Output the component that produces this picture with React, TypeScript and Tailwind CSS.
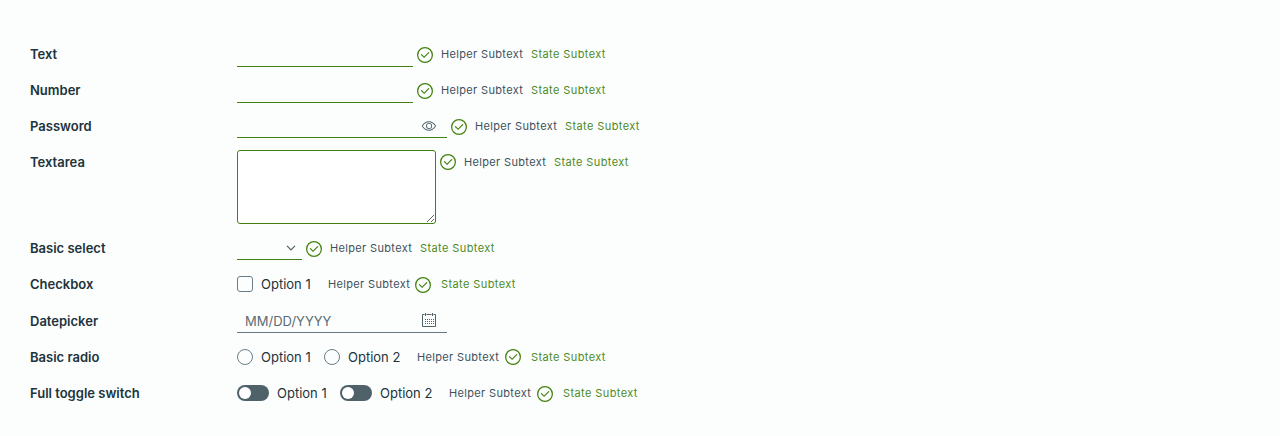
import type { ReactNode } from 'react';

function Row({ label, labelSpacing, height, children }: { label: string; labelSpacing: string; height: string; children: ReactNode }) {
  return (
    <div className={`flex items-start ${height}`}>
      <div className={`w-[207px] shrink-0 text-[13px] font-semibold leading-6 text-[#21333b] ${labelSpacing}`}>{label}</div>
      {children}
    </div>
  );
}

function Check({ className }: { className: string }) {
  return (
    <svg viewBox="0 0 36 36" className={`size-[18px] shrink-0 fill-[#42810e] ${className}`} aria-hidden="true">
      <path d="M18,2A16,16,0,1,0,34,18,16,16,0,0,0,18,2Zm0,29.5A13.5,13.5,0,1,1,31.500,18,13.500,13.500,0,0,1,18,31.5Z" />
      <path d="M26.200,12.500a1.200,1.200,0,0,0-1.700,0L16.200,20.800l-4.500-4.500a1.200,1.200,0,0,0-1.700,1.700L16.200,24.200l10-10A1.200,1.200,0,0,0,26.200,12.500Z" />
    </svg>
  );
}

const Helper = ({ className = '' }: { className?: string }) => (
  <span className={`w-[90px] shrink-0 whitespace-nowrap text-[11px] leading-6 tracking-[0.34px] text-[#40505a] ${className}`}>Helper Subtext</span>
);

const State = ({ className = '' }: { className?: string }) => (
  <span className={`whitespace-nowrap text-[11px] leading-6 tracking-[0.4px] text-[#4c8a1f] ${className}`}>State Subtext</span>
);

const Messages = ({ check = 'mt-1' }: { check?: string }) => (
  <>
    <Check className={`ml-[3px] mr-[7px] ${check}`} />
    <Helper />
    <State />
  </>
);

const Option = ({ children, className }: { children: string; className: string }) => (
  <span className={`shrink-0 whitespace-nowrap text-[13px] leading-6 text-[#21333b] ${className}`}>{children}</span>
);

const Toggle = () => (
  <span className="mt-1 flex h-4 w-8 shrink-0 items-center rounded-full bg-[#4f6169] px-0.5">
    <span className="size-3 rounded-full bg-white" />
  </span>
);

export default function App() {
  return (
    <main className="h-[436px] w-full bg-[#fcfefe] px-[30px] pt-[42px] font-['Inter',sans-serif]">
      <Row label="Text" labelSpacing="" height="h-9">
        <div className="h-[25px] w-[176px] border-b border-[#42810e]" />
        <Messages />
      </Row>
      <Row label="Number" labelSpacing="" height="h-9">
        <div className="h-[25px] w-[176px] border-b border-[#42810e]" />
        <Messages />
      </Row>
      <Row label="Password" labelSpacing="" height="h-9">
        <div className="flex h-6 w-[210px] justify-end border-b border-[#42810e] pr-2.5">
          <svg viewBox="0 0 36 36" className="mt-1 size-4 fill-[#4f6169]" aria-hidden="true">
            <path d="M33.62,17.53c-3.37-6.23-9.28-10-15.82-10S5.34,11.3,2,17.53L1.72,18l.26.48c3.37,6.23,9.28,10,15.82,10s12.46-3.72,15.82-10l.26-.48ZM17.8,26.43C12.17,26.43,7,23.29,4,18c3-5.29,8.17-8.43,13.8-8.43S28.54,12.72,31.59,18C28.54,23.29,23.42,26.43,17.8,26.43Z" />
            <path d="M18.09,11.17A6.86,6.86,0,1,0,25,18,6.86,6.86,0,0,0,18.09,11.17Zm0,11.72A4.86,4.86,0,1,1,23,18,4.87,4.87,0,0,1,18.09,22.89Z" />
          </svg>
        </div>
        <Messages />
      </Row>
      <Row label="Textarea" labelSpacing="" height="h-[86px]">
        <textarea className="h-[74px] w-[199px] resize rounded-[3px] border border-[#42810e] bg-white outline-none" aria-label="Textarea" />
        <Messages check="mt-[3px]" />
      </Row>
      <Row label="Basic select" labelSpacing="" height="h-9">
        <div className="flex h-6 w-[65px] justify-end border-b border-[#42810e] pr-1.5">
          <svg viewBox="0 0 10 6" className="mt-[9px] h-1.5 w-2.5 fill-none stroke-[#4f6169] stroke-[1.2]" aria-hidden="true">
            <path d="M1 .8 5 4.800 9 .8" />
          </svg>
        </div>
        <Messages />
      </Row>
      <Row label="Checkbox" labelSpacing="" height="h-[37px]">
        <span className="mt-1 size-4 shrink-0 rounded-[3px] border border-[#6b7d86]" />
        <Option className="ml-2 w-[67px]">Option 1</Option>
        <Helper className="w-[86px]!" />
        <Check className="mt-1" />
        <State className="ml-[9px]" />
      </Row>
      <Row label="Datepicker" labelSpacing="" height="h-9">
        <div className="flex h-6 w-[210px] justify-between border-b border-[#667882] pl-2 pr-2.5">
          <span className="text-[13px] leading-6 text-[#5b6b74]">MM/DD/YYYY</span>
          <svg viewBox="0 0 16 16" className="mt-[3px] size-4 fill-none stroke-[#4f6169]" aria-hidden="true">
            <path d="M3.500 2.500h-2v12h13v-12h-2M5.500 2.500h5M4.500 1v3M11.500 1v3" />
            <path d="M4 7.500h9M4 9.500h9M4 11.500h9" strokeDasharray="1 1" />
          </svg>
        </div>
      </Row>
      <Row label="Basic radio" labelSpacing="" height="h-9">
        <span className="mt-1 size-4 shrink-0 rounded-full border border-[#6b7d86]" />
        <Option className="ml-2 w-[63px]">Option 1</Option>
        <span className="mt-1 size-4 shrink-0 rounded-full border border-[#6b7d86]" />
        <Option className="ml-2 w-[69px]">Option 2</Option>
        <Helper className="w-[87px]!" />
        <Check className="mt-[3px]" />
        <State className="ml-[9px]" />
      </Row>
      <Row label="Full toggle switch" labelSpacing="" height="h-9">
        <Toggle />
        <Option className="ml-2 w-[63px]">Option 1</Option>
        <Toggle />
        <Option className="ml-2 w-[69px]">Option 2</Option>
        <Helper className="w-[87px]!" />
        <Check className="mt-1" />
        <State className="ml-[9px]" />
      </Row>
    </main>
  );
}
